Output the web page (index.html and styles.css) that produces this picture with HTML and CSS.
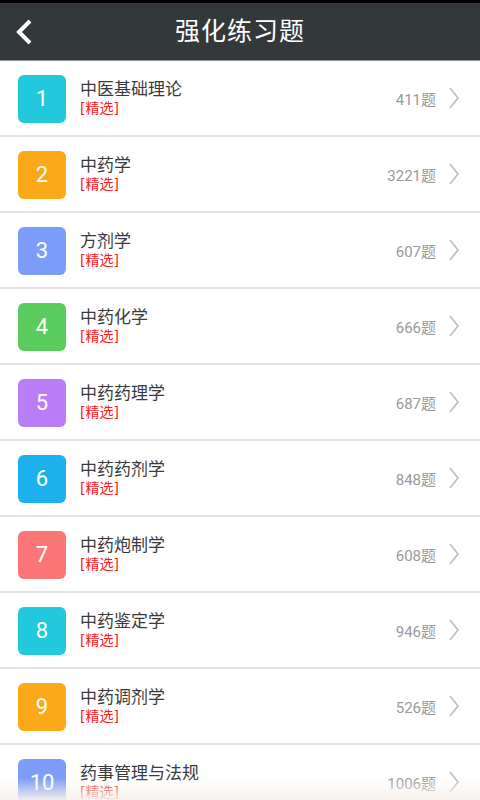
FILE: index.html
```html
<!DOCTYPE html>
<html lang="zh-CN">
<head>
<meta charset="utf-8">
<title>强化练习题</title>
<link rel="stylesheet" href="styles.css">
</head>
<body>
<div class="screen">
  <div class="statusbar"></div>
  <header class="topbar">
    <span class="back">
      <svg width="20" height="28" viewBox="0 0 20 28"><polyline points="15,3 4,14 15,25" fill="none" stroke="#fff" stroke-width="4" stroke-linecap="butt" stroke-linejoin="miter"/></svg>
    </span>
    <h1 class="title">强化练习题</h1>
  </header>
  <ul class="list">
    <li class="row"><span class="badge c-cyan">1</span><div class="info"><span class="name">中医基础理论</span><span class="tag">[精选]</span></div><span class="count">411题</span><span class="chev"><svg width="12" height="24" viewBox="0 0 12 24"><polyline points="2,2 10,12 2,22" fill="none" stroke="#bdbdbd" stroke-width="1.6"/></svg></span></li>
    <li class="row"><span class="badge c-orange">2</span><div class="info"><span class="name">中药学</span><span class="tag">[精选]</span></div><span class="count">3221题</span><span class="chev"><svg width="12" height="24" viewBox="0 0 12 24"><polyline points="2,2 10,12 2,22" fill="none" stroke="#bdbdbd" stroke-width="1.6"/></svg></span></li>
    <li class="row"><span class="badge c-blue">3</span><div class="info"><span class="name">方剂学</span><span class="tag">[精选]</span></div><span class="count">607题</span><span class="chev"><svg width="12" height="24" viewBox="0 0 12 24"><polyline points="2,2 10,12 2,22" fill="none" stroke="#bdbdbd" stroke-width="1.6"/></svg></span></li>
    <li class="row"><span class="badge c-green">4</span><div class="info"><span class="name">中药化学</span><span class="tag">[精选]</span></div><span class="count">666题</span><span class="chev"><svg width="12" height="24" viewBox="0 0 12 24"><polyline points="2,2 10,12 2,22" fill="none" stroke="#bdbdbd" stroke-width="1.6"/></svg></span></li>
    <li class="row"><span class="badge c-purple">5</span><div class="info"><span class="name">中药药理学</span><span class="tag">[精选]</span></div><span class="count">687题</span><span class="chev"><svg width="12" height="24" viewBox="0 0 12 24"><polyline points="2,2 10,12 2,22" fill="none" stroke="#bdbdbd" stroke-width="1.6"/></svg></span></li>
    <li class="row"><span class="badge c-sky">6</span><div class="info"><span class="name">中药药剂学</span><span class="tag">[精选]</span></div><span class="count">848题</span><span class="chev"><svg width="12" height="24" viewBox="0 0 12 24"><polyline points="2,2 10,12 2,22" fill="none" stroke="#bdbdbd" stroke-width="1.6"/></svg></span></li>
    <li class="row"><span class="badge c-red">7</span><div class="info"><span class="name">中药炮制学</span><span class="tag">[精选]</span></div><span class="count">608题</span><span class="chev"><svg width="12" height="24" viewBox="0 0 12 24"><polyline points="2,2 10,12 2,22" fill="none" stroke="#bdbdbd" stroke-width="1.6"/></svg></span></li>
    <li class="row"><span class="badge c-cyan">8</span><div class="info"><span class="name">中药鉴定学</span><span class="tag">[精选]</span></div><span class="count">946题</span><span class="chev"><svg width="12" height="24" viewBox="0 0 12 24"><polyline points="2,2 10,12 2,22" fill="none" stroke="#bdbdbd" stroke-width="1.6"/></svg></span></li>
    <li class="row"><span class="badge c-orange">9</span><div class="info"><span class="name">中药调剂学</span><span class="tag">[精选]</span></div><span class="count">526题</span><span class="chev"><svg width="12" height="24" viewBox="0 0 12 24"><polyline points="2,2 10,12 2,22" fill="none" stroke="#bdbdbd" stroke-width="1.6"/></svg></span></li>
    <li class="row"><span class="badge c-blue">10</span><div class="info"><span class="name">药事管理与法规</span><span class="tag">[精选]</span></div><span class="count">1006题</span><span class="chev"><svg width="12" height="24" viewBox="0 0 12 24"><polyline points="2,2 10,12 2,22" fill="none" stroke="#bdbdbd" stroke-width="1.6"/></svg></span></li>
  </ul>
  <div class="fade"></div>
</div>
</body>
</html>
```

FILE: styles.css
```css
html, body {
  margin: 0;
  padding: 0;
  background: #ffffff;
}

body {
  font-family: Roboto, "Noto Sans CJK SC", sans-serif;
  overflow: hidden;
}

.screen {
  position: relative;
  width: 480px;
  height: 800px;
  overflow: hidden;
  background: #ffffff;
}

.statusbar {
  height: 3px;
  background: #000000;
}

.topbar {
  height: 57px;
  background: #33383b;
  border-bottom: 1px solid #8e9294;
  display: flex;
  align-items: center;
  justify-content: center;
  position: relative;
}

.back {
  position: absolute;
  left: 15px;
  top: 15px;
  display: flex;
}

.title {
  margin: 0;
  color: #ffffff;
  font-size: 25px;
  font-weight: normal;
  letter-spacing: 1px;
  line-height: 1;
}

.list {
  list-style: none;
  margin: 0;
  padding: 0;
}

.row {
  height: 74px;
  border-bottom: 2px solid #e4e4e4;
  display: flex;
  align-items: center;
  padding: 0 18px 0 18px;
}

.badge {
  width: 48px;
  height: 48px;
  border-radius: 6px;
  color: #ffffff;
  font-size: 22px;
  display: flex;
  align-items: center;
  justify-content: center;
  flex: none;
  margin-top: 1px;
}

.c-cyan { background: #22c8dc; }
.c-orange { background: #fba918; }
.c-blue { background: #7d9dfa; }
.c-green { background: #5bcc5e; }
.c-purple { background: #b97df8; }
.c-sky { background: #1cb1ec; }
.c-red { background: #fb7676; }

.info {
  display: flex;
  flex-direction: column;
  margin-left: 14px;
  flex: 1;
}

.name {
  font-size: 17px;
  color: #3a3a3a;
  line-height: 20px;
}

.tag {
  font-family: "DejaVu Sans", "Noto Sans CJK SC", sans-serif;
  font-size: 14px;
  color: #ff1a1a;
  line-height: 19px;
}

.count {
  font-size: 15px;
  color: #999999;
  margin-right: 12px;
}

.chev {
  display: flex;
  margin-right: 2px;
}

.fade {
  position: absolute;
  left: 0;
  right: 0;
  bottom: 0;
  height: 22px;
  background: linear-gradient(to bottom, rgba(247, 242, 234, 0), rgba(247, 242, 234, 0.95));
}
```
